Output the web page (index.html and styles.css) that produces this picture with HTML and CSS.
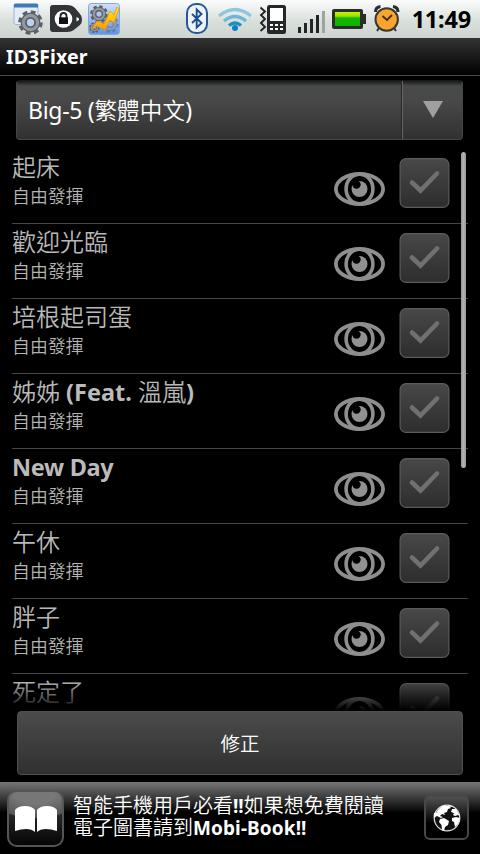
FILE: index.html
```html
<!DOCTYPE html>
<html lang="zh-Hant">
<head>
<meta charset="utf-8">
<title>ID3Fixer</title>
<link rel="stylesheet" href="styles.css">
</head>
<body>
<svg class="defs" aria-hidden="true">
  <defs>
    <linearGradient id="boxFill" x1="0" y1="0" x2="0" y2="1"><stop offset="0" stop-color="#484848"/><stop offset="1" stop-color="#2d2d2d"/></linearGradient>
    <linearGradient id="green" x1="0" y1="0" x2="0" y2="1"><stop offset="0" stop-color="#c8f400"/><stop offset=".3" stop-color="#9be000"/><stop offset=".42" stop-color="#14b800"/><stop offset="1" stop-color="#10b000"/></linearGradient>
    <linearGradient id="blue" x1="0" y1="0" x2="0" y2="1"><stop offset="0" stop-color="#d2e0f5"/><stop offset="1" stop-color="#5c94f0"/></linearGradient>
    <linearGradient id="bolt" x1="0" y1="0" x2="0" y2="1"><stop offset="0" stop-color="#fff000"/><stop offset="1" stop-color="#ff9a00"/></linearGradient>
    <symbol id="eye" viewBox="0 0 52 36">
      <ellipse cx="26.500" cy="18" rx="23.6" ry="15" fill="none" stroke="#8e8e8e" stroke-width="3.8"/>
      <ellipse cx="26.500" cy="18" rx="13.4" ry="14.8" fill="none" stroke="#8e8e8e" stroke-width="3.6"/>
      <circle cx="26.500" cy="18" r="8" fill="#919191"/>
      <circle cx="23.500" cy="13.6" r="4.2" fill="#000"/>
    </symbol>
    <symbol id="check" viewBox="0 0 51 50">
      <rect x="1.100" y=".6" width="48.800" height="48.800" rx="6" fill="url(#boxFill)" stroke="#5b5b5b" stroke-width="1.2"/>
      <path d="M13 24.500 21.500 32.500 38 15.500" fill="none" stroke="#707070" stroke-width="4.600" stroke-linecap="round"/>
    </symbol>
    <symbol id="gear" viewBox="-12 -12 24 24">
      <circle r="9.800" fill="none" stroke="#5c6165" stroke-width="4" stroke-dasharray="4.400 3.300"/>
      <circle r="6.500" fill="none" stroke="#5c6165" stroke-width="6"/>
      <circle r="6.800" fill="none" stroke="#94999d" stroke-width="3"/>
    </symbol>
  </defs>
</svg>
<header class="status">
  <svg width="480" height="38" viewBox="0 0 480 38">
    <rect x="14" y="3.500" width="24" height="21" rx="2" fill="#e4edf7" stroke="#9bb5d5"/>
    <path d="M14 4h24v3.500H14z" fill="#4178b7"/>
    <circle cx="30.500" cy="22.500" r="5" fill="#b9d3ee"/>
    <use href="#gear" x="18" y="9.500" width="25" height="26"/>
    <path d="M53 5h14q5 0 8 3l5 6q2 2 2 5.500t-2 5.500l-5 4q-3 3-8 3H53q-3 0-3-3V8q0-3 3-3z" fill="#333437"/>
    <circle cx="63.500" cy="19" r="8.800" fill="#fff"/>
    <path d="M60.500 18v-2a3 3 0 0 1 6 0v2" fill="none" stroke="#222" stroke-width="1.800"/><path d="M59 17.300h9v6.700h-9z" fill="#111"/>
    <path d="M76.500 17 79 18.500v1.500l-2.500 1.500z" fill="#fff"/>
    <rect x="88.500" y="3.500" width="31" height="31" rx="3" fill="url(#blue)" stroke="#8ba6d2"/>
    <use href="#gear" x="90" y="5" width="18" height="18"/><use href="#gear" x="101" y="15" width="18" height="18" opacity=".5"/><use href="#gear" x="89" y="22" width="11" height="11"/>
    <path d="m91 29.500 6-8.500 7 3 6-13 4 4 3-8 2 2-5 14-4-3-5 10-8-4z" fill="url(#bolt)" stroke="#f08a1e" stroke-width=".7"/>
    <rect x="187" y="4" width="20" height="29" rx="9" fill="#edf3f7" stroke="#28569b" stroke-width="2"/>
    <path d="m192 14 9.500 9-4.800 4.500V9.500l4.800 4.500-9.500 9" fill="none" stroke="#1c4d92" stroke-width="1.900"/>
    <g fill="none" stroke-width="3.200"><path d="M219 16q16-13 32 0" stroke="#8fc8dd"/><path d="M224 21q11-9 22 0" stroke="#6fb7d5"/><path d="M229 25.500q6-5 12 0" stroke="#198ec5"/></g><circle cx="235" cy="28" r="3" fill="#0c80c4"/>
    <path d="m260.500 7.500 4.500 4-4 3.500 4 4-4 4 4 4-4.500 4" fill="none" stroke="#222" stroke-width="1.900"/>
    <rect x="267" y="5" width="19" height="29" rx="2.500" fill="#262729"/><path d="M270 8h13v13h-13z" fill="#fff"/>
    <path d="M270 24h3v2h-3zm5 0h3v2h-3zm5 0h3v2h-3zm-10 4h3v2h-3zm5 0h3v2h-3zm5 0h3v2h-3z" fill="#fff"/>
    <path d="M298 27h3v6h-3zm6-4h3v10h-3zm6-4h3v14h-3zm6-4h3v18h-3z" fill="#242424"/><path d="M322 11h3v22h-3z" fill="#9da39e"/>
    <rect x="332" y="9" width="31" height="20" rx="2" fill="#2b2c2d"/><path d="M362 14h4v10h-4z" fill="#2b2c2d"/><path d="M335 12h25v14h-25z" fill="url(#green)"/>
    <path d="M375.500 12q0-5 5-5.500M398 12q0-5-5-5.500" fill="none" stroke="#2c2c2c" stroke-width="3"/><path d="m379 28-2 3m17-3 2 3" stroke="#333" stroke-width="2"/>
    <circle cx="386.700" cy="19.500" r="11.200" fill="#f9a42d" stroke="#373737" stroke-width="2"/><path d="m382.500 16 4.500 4 5-5" fill="none" stroke="#37301f" stroke-width="1.800"/>
  </svg>
  <time class="clock">11:49</time>
</header>
<h1 class="title">ID3Fixer</h1>
<div class="spinner"><span class="spinner-text">Big-5 (<span class="cjk">繁體中文</span>)</span><span class="spinner-arrow"><svg width="20" height="18"><path d="M0 0h20L10 17z" fill="#a0a0a0"/></svg></span></div>
<main class="list">
  <div class="row"><div class="song"><div class="name"><i>起床</i></div><div class="artist">自由發揮</div></div><svg class="eye"><use href="#eye"/></svg><svg class="check"><use href="#check"/></svg></div>
  <div class="row"><div class="song"><div class="name"><i>歡迎光臨</i></div><div class="artist">自由發揮</div></div><svg class="eye"><use href="#eye"/></svg><svg class="check"><use href="#check"/></svg></div>
  <div class="row"><div class="song"><div class="name"><i>培根起司蛋</i></div><div class="artist">自由發揮</div></div><svg class="eye"><use href="#eye"/></svg><svg class="check"><use href="#check"/></svg></div>
  <div class="row"><div class="song"><div class="name"><i>姊姊</i> (Feat. <i>溫嵐</i>)</div><div class="artist">自由發揮</div></div><svg class="eye"><use href="#eye"/></svg><svg class="check"><use href="#check"/></svg></div>
  <div class="row"><div class="song"><div class="name latin">New Day</div><div class="artist">自由發揮</div></div><svg class="eye"><use href="#eye"/></svg><svg class="check"><use href="#check"/></svg></div>
  <div class="row"><div class="song"><div class="name"><i>午休</i></div><div class="artist">自由發揮</div></div><svg class="eye"><use href="#eye"/></svg><svg class="check"><use href="#check"/></svg></div>
  <div class="row"><div class="song"><div class="name"><i>胖子</i></div><div class="artist">自由發揮</div></div><svg class="eye"><use href="#eye"/></svg><svg class="check"><use href="#check"/></svg></div>
  <div class="row"><div class="song"><div class="name"><i>死定了</i></div></div><svg class="eye"><use href="#eye"/></svg><svg class="check"><use href="#check"/></svg></div>
  <div class="fade"></div>
  <div class="scrollbar"></div>
</main>
<button class="fix">修正</button>
<footer class="ad">
  <div class="book"><svg width="42" height="28" viewBox="0 0 42 28"><path d="M0 5Q3 1 10 1T20 5v22q-3-3-9-3-5 0-11 2zM22 5q3-4 10-4t10 4v21q-6-2-11-2-6 0-9 3z" fill="#fff"/></svg></div>
  <p class="ad-text"><i>智能手機用戶必看</i>!!<i>如果想免費閱讀</i><br><i>電子圖書請到</i><span class="brand">Mobi-Book!!</span></p>
  <div class="globe"><svg width="28" height="28" viewBox="0 0 28 28"><circle cx="14" cy="14" r="12.800" fill="#111" stroke="#ddd" stroke-width="1.200"/><path d="M3 9q3-6 8-7.500l5 .5 2 2-3 1-1 3-3 1 1 2-3-1-2 2 3 1-2 1-4-2-3 2q-.5-2 0-5zM7 15l4-1 5 3-1 4-3 2-1 4-2-1-.5-5L6 18zM19 5l4 0 4 7-2-1-3 1-2-1 1-2-3-1zM19 14l4-1 4 1-2 6-3 3-1-5-2-1zM14 1l5 1-1 1z" fill="#fff"/></svg></div>
</footer>
</body>
</html>
```

FILE: styles.css
```css
* { box-sizing: border-box; }
body { margin: 0; width: 480px; height: 854px; overflow: hidden; background: #000; color: #fff; font-family: "Noto Sans", "Noto Sans CJK TC", sans-serif; display: flex; flex-direction: column; }
i { font-style: normal; font-weight: 350; font-family: "Noto Sans CJK TC", sans-serif; }
svg { display: block; flex: none; }
.defs { position: absolute; width: 0; height: 0; }
.status { position: relative; height: 38px; flex: none; background: linear-gradient(#fbfdfc, #d9e0dc 55%, #cdd5d1); }
.clock { position: absolute; right: 9px; top: 0; line-height: 39px; font-size: 23.5px; font-weight: 700; color: #000; letter-spacing: -.2px; }
.title { margin: 0; height: 38px; flex: none; padding-left: 6px; font-size: 19.500px; line-height: 38px; font-weight: 700; letter-spacing: .1px; background: linear-gradient(#333, #000); border-bottom: 1px solid #484848; }
.spinner { margin: 4px 17px 0 16px; height: 60px; flex: none; display: flex; border-radius: 4px; border: 1px solid #464646; border-top-color: #181818; background: linear-gradient(#191919, #484a49 5px, #484848 20px, #323131); }
.spinner-text { flex: 1; padding-left: 11px; line-height: 58px; font-size: 23px; letter-spacing: -.3px; white-space: nowrap; }
.cjk { font-family: "Noto Sans CJK TC", sans-serif; font-size: 22.500px; line-height: 1; font-weight: 350; letter-spacing: .2px; }
.spinner-arrow { width: 60px; border-left: 1px solid #656565; box-shadow: -1px 0 #282828; display: flex; align-items: center; justify-content: center; }
.list { position: relative; height: 562px; margin-top: 9px; flex: none; overflow: hidden; }
.row { height: 75px; margin: 0 12px; border-bottom: 1px solid #454545; display: flex; align-items: flex-start; }
.song { flex: 1; white-space: nowrap; color: #b4b4b4; }
.name { height: 32px; line-height: 36px; font-size: 23.500px; font-weight: 700; color: #bbb; }
.latin { letter-spacing: -.3px; }
.name i { font-size: 24px; line-height: 1; color: #b8b8b8; }
.artist { height: 30px; line-height: 30px; font-size: 17.900px; font-weight: 350; color: #b4b4b4; }
.eye { width: 52px; height: 36px; margin: 22px 14px 0 0; }
.check { width: 51px; height: 50px; margin: 9px 18px 0 0; }
.fade { position: absolute; left: 0; right: 0; bottom: 0; height: 30px; background: linear-gradient(transparent, #000); }
.scrollbar { position: absolute; left: 461px; top: 3px; width: 5px; height: 316px; border-radius: 3px; background: linear-gradient(90deg, #989898, #b2b2b2, #989898); }
.fix { margin: 0 17px; height: 64px; flex: none; padding: 0; border: 1px solid #505050; border-radius: 4px; background: linear-gradient(#4a4b4a, #303030); color: #fff; font: 350 19.500px/62px "Noto Sans CJK TC", sans-serif; }
.ad { height: 72px; margin-top: 7px; flex: none; display: flex; align-items: flex-start; background: linear-gradient(#777, #000 31px); }
.book { width: 57px; height: 57px; margin: 8px 9px 0 7px; border: 2px solid #555; border-radius: 10px; display: flex; align-items: center; justify-content: center; background: radial-gradient(ellipse 90% 50% at 50% 0, #777 0 45%, #555 97%, transparent 100%), linear-gradient(#555, #222 50%, #050505); }
.ad-text { flex: 1; margin: 13px 0 0; font-size: 19px; font-weight: 700; line-height: 22px; white-space: nowrap; }
.ad-text i { font-size: 20px; line-height: 1; }
.brand { letter-spacing: .1px; }
.globe { width: 45px; height: 45px; margin: 13px 11px 0 0; border: 2px solid #484848; border-radius: 6px; display: flex; align-items: center; justify-content: center; background: linear-gradient(#505050, #000 65%); }
```
